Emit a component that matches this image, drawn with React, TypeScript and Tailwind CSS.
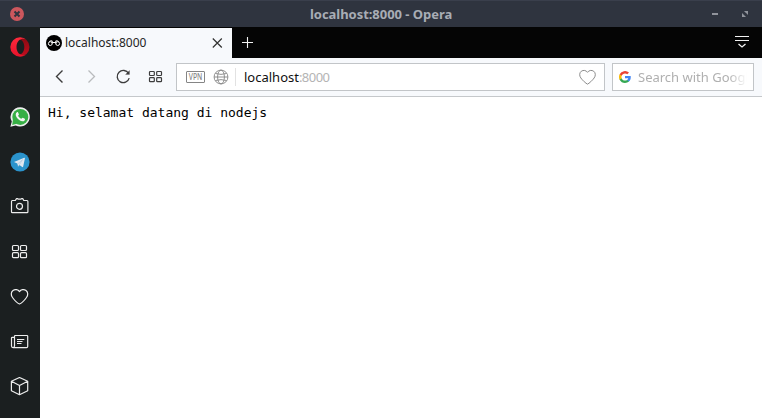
import type { ReactNode } from "react";

function Icon({ children, className = "" }: { children: ReactNode; className?: string }) {
  return (
    <svg width="20" height="20" viewBox="0 0 20 20" fill="none" stroke="currentColor" strokeWidth="1.2" className={"shrink-0 " + className}>
      {children}
    </svg>
  );
}

function OperaLogo() {
  return (
    <Icon className="size-5">
      <defs>
        <linearGradient id="operaLeft" x1="0" y1="0" x2="0" y2="1">
          <stop offset="0" stopColor="#ff2a3c" />
          <stop offset="1" stopColor="#e8132b" />
        </linearGradient>
        <linearGradient id="operaRight" x1="0" y1="0" x2="0" y2="1">
          <stop offset="0" stopColor="#8e0a12" />
          <stop offset="1" stopColor="#c00d1e" />
        </linearGradient>
      </defs>
      <path stroke="none" fill="url(#operaRight)" d="M9 2.8C11 1.2 14 1.2 16.5 2.9A9.9 9.9 0 0 1 16.5 17.1C14 18.800 11 18.800 9 17.2C12.200 17.8 14.300 14.300 14.300 10S12.200 2.200 9 2.800Z" />
      <path stroke="none" fill="url(#operaLeft)" d="M10 .3A9.7 9.7 0 1 0 10 19.7C12.5 19.7 14.8 18.8 16.6 17.2C12.8 19.6 6.5 17.5 6.5 10S12.8.4 16.6 2.8A9.7 9.7 0 0 0 10 .3Z" />
    </Icon>
  );
}

function WhatsAppLogo() {
  return (
    <Icon>
      <path fill="#eeeeee" stroke="none" d="M10.3.3A9.6 9.6 0 0 0 1.8 14.6L.4 19.8l5.3-1.4A9.6 9.6 0 1 0 10.3.3Z" />
      <circle cx="10.3" cy="9.9" r="8" fill="#37af45" stroke="none" />
      <path fill="#37af45" stroke="none" d="M3 12.5 2.2 18l5.300-1.500Z" />
      <path fill="#f4f4f4" stroke="none" d="M7 5.2c.4-.2.9-.2 1.1.3l.8 1.8c.2.5-.7 1.2-.8 1.5.6 1.3 1.8 2.4 3.2 3 .4-.1 1-1.3 1.5-1l2 1c.5.3.1 1.6-.6 2.1-2.3 1.5-6.1-1.1-7.6-3.6C5.3 8.200 5.500 6 7 5.200Z" />
    </Icon>
  );
}

function TelegramLogo() {
  return (
    <Icon>
      <circle cx="10" cy="10" r="9.6" fill="#2b93cc" stroke="none" />
      <path fill="#dfe7f0" stroke="none" d="m4 9.900 10.200-4.100c.5-.2.9.1.7.8l-1.700 8c-.1.6-.6.7-1 .4l-2.700-2-1.400 1.400-.8-3Z" />
      <path stroke="#aac5dc" strokeWidth=".6" d="m7.900 11.800 4.700-4.200-3.300 5.200-1.200 1.500" />
    </Icon>
  );
}

function HeartIcon({ className = "" }: { className?: string }) {
  return (
    <Icon className={className}>
      <path strokeLinejoin="round" d="M10 4.600C8.700 2.400 5.500 1.900 3.500 3.400C1.300 5 1.300 8.300 3 10.500C4.700 12.900 8.300 16.300 10 17C11.700 16.300 15.300 12.900 17 10.500C18.700 8.300 18.700 5 16.500 3.400C14.500 1.900 11.300 2.400 10 4.600Z" />
    </Icon>
  );
}

function Sidebar() {
  return (
    <aside className="flex w-10 shrink-0 flex-col items-center bg-[#1b1f20] pt-2.5 text-[#ededed]">
      <OperaLogo />
      <nav className="mt-[50px] flex flex-col gap-[25px]">
        <WhatsAppLogo />
        <TelegramLogo />
        <Icon>
          <path strokeLinejoin="round" d="M2.300 3.500H5.300L6.500 1.600H7.700L8.100 2.100H11L11.500 1.600H12.700L13.800 3.500H17Q17.900 3.500 17.900 4.400V14.700Q17.900 15.600 17 15.600H2.300Q1.500 15.600 1.500 14.700V4.400Q1.500 3.500 2.300 3.500Z" />
          <circle cx="9.500" cy="9.300" r="3" />
        </Icon>
        <Icon>
          <rect x="2.500" y="3.500" width="6" height="5" rx="1" />
          <rect x="10.500" y="3.500" width="6" height="5" rx="1" />
          <rect x="2.500" y="10.700" width="6" height="5" rx="1" />
          <rect x="10.500" y="10.700" width="6" height="5" rx="1" />
        </Icon>
        <HeartIcon className="-translate-x-[.5px]" />
        <Icon>
          <path strokeLinejoin="round" d="M4.500 5.300H2.300Q1.500 5.300 1.500 6.100V14.100Q1.500 15.600 3 15.600H16.500Q17.700 15.600 17.700 14.400V4.300Q17.700 3.500 16.900 3.500H5.300Q4.500 3.500 4.500 4.300V14.100Q4.500 15.600 3 15.600" />
          <path d="M7 7.500H14.300M7 9.500H12.500M7 11.500H11.500" strokeWidth="1" />
        </Icon>
        <Icon>
          <path strokeLinejoin="round" d="M9.500.5 17.700 4.300V13.700L9.500 17.700 1.400 13.700V4.300ZM1.400 4.300 9.500 8.500 17.700 4.300M9.500 8.500V17.700" />
        </Icon>
      </nav>
    </aside>
  );
}

function TitleBar() {
  return (
    <header className="flex h-[27px] shrink-0 items-center border-t border-[#3a3f4c] bg-[#2f343f] pl-[9px] pr-3">
      <svg width="16" height="16" viewBox="0 0 16 16" className="-mt-px">
        <circle cx="8" cy="8" r="7" fill="#cc575d" />
        <path d="m5.500 5.500 5 5m0-5-5 5" stroke="#2f343f" strokeWidth="2" />
      </svg>
      <h1 className="ml-[285px] flex-1 whitespace-nowrap text-[13px] font-bold leading-5 tracking-[-0.04px] text-[#a8adb5]">localhost:8000 - Opera</h1>
      <svg width="40" height="14" viewBox="0 0 40 14" fill="#90939b" className="-mt-px">
        <path d="M2 6h6v2H2ZM34 4h4v4l-1.400-1.400L35.400 5.400ZM32 6l4 4h-4Z" />
      </svg>
    </header>
  );
}

function TabStrip() {
  return (
    <div className="flex h-[31px] bg-[#050505] pt-px text-[#f2f2f2]">
      <div className="flex w-48 shrink-0 items-center bg-[#f7f9fc] pl-1.5 pr-1.5 text-[#252525]">
        <svg width="16" height="16" viewBox="0 0 16 16" fill="none" stroke="#fff" strokeWidth="1" className="-mt-px">
          <circle cx="8" cy="8" r="8" fill="#000" stroke="none" />
          <circle cx="4.300" cy="8.600" r="1.900" />
          <circle cx="11.700" cy="8.600" r="1.900" />
          <path d="M3.300 6.500Q4.500 5.500 6.200 5.900V8.600M12.700 6.500Q11.500 5.500 9.800 5.900V8.600M6.200 7.500H9.800" />
        </svg>
        <span className="ml-[3px] flex-1 text-[12px] leading-[18px]">localhost:8000</span>
        <svg width="18" height="18" viewBox="0 0 18 18" stroke="#333" strokeWidth="1.200">
          <path d="m4.800 4.500 9 9m0-9-9 9" />
        </svg>
      </div>
      <svg width="30" height="30" viewBox="0 0 30 30" stroke="currentColor" strokeWidth="1.100">
        <path d="M15.500 9v11M10 14.500h11" />
      </svg>
      <svg width="30" height="30" viewBox="0 0 30 30" fill="none" stroke="currentColor" className="ml-auto mr-[5px]">
        <path d="M8 8.500h14M8 12.500h14" />
        <path d="m11.500 16 3.500 3 3.500-3" strokeWidth="1.300" />
      </svg>
    </div>
  );
}

function AddressBar() {
  return (
    <div className="flex h-7 w-[429px] shrink-0 items-center border border-[#c2c5c8] bg-white pl-[9px] pr-2 text-[#858585]">
      <div className="flex h-3 w-[19px] items-center justify-center rounded-[1px] border border-current">
        <svg width="17" height="10" viewBox="0 0 17 10" overflow="visible">
          <text x="8.500" y="8.200" textAnchor="middle" textLength="13.500" lengthAdjust="spacingAndGlyphs" fontSize="9" fontWeight="500" fill="currentColor">VPN</text>
        </svg>
      </div>
      <svg width="16" height="16" viewBox="0 0 16 16" fill="none" stroke="currentColor" strokeWidth=".9" className="ml-2">
        <circle cx="8" cy="8" r="6.900" />
        <ellipse cx="8" cy="8" rx="3.400" ry="6.900" />
        <path d="M1.100 8h13.800M2.500 4.500Q8 6.300 13.500 4.500M2.500 11.500Q8 9.700 13.500 11.500" />
      </svg>
      <div className="ml-1.5 h-[18px] w-px bg-[#e2e2e2]" />
      <span className="ml-2 flex-1 text-[13px] leading-5 text-[#101010]">
        localhost<span className="tracking-[-0.55px] text-[#b4b4b4]">:8000</span>
      </span>
      <HeartIcon className="-mr-px size-[19px] [stroke-width:1]" />
    </div>
  );
}

function SearchBox() {
  return (
    <div className="flex h-7 w-[142px] shrink-0 items-center border border-[#c2c5c8] bg-white pl-1.5">
      <svg width="12" height="12" viewBox="0 0 24 24">
        <path fill="#4285f4" d="M23.500 12.300c0-.9-.1-1.700-.2-2.500H12v4.700h6.500c-.3 1.500-1.200 2.800-2.400 3.600v3h3.900c2.200-2.100 3.500-5.200 3.500-8.800Z" />
        <path fill="#34a853" d="M12 24c3.200 0 6-1.100 8-2.900l-3.900-3c-1.100.7-2.500 1.100-4.100 1.100-3.100 0-5.800-2.100-6.700-4.900h-4v3.100C3.300 21.300 7.300 24 12 24Z" />
        <path fill="#fbbc05" d="M5.300 14.300a7 7 0 0 1 0-4.600V6.600h-4a12 12 0 0 0 0 10.800Z" />
        <path fill="#ea4335" d="M12 4.800c1.800 0 3.300.6 4.600 1.800L20 3.200A12 12 0 0 0 1.300 6.600l4 3.100C6.200 6.900 8.900 4.800 12 4.800Z" />
      </svg>
      <span className="ml-[7px] w-[109px] overflow-hidden whitespace-nowrap text-[13px] leading-5 text-[#b0b0b0] [mask-image:linear-gradient(to_right,black_83%,transparent)]">Search with Google</span>
    </div>
  );
}

function Toolbar() {
  return (
    <div className="flex h-[39px] items-center border-b border-[#c5c8cb] bg-[#f7f9fc] pr-2 text-[#3c3c3c]">
      <div className="flex w-[136px] shrink-0 items-center gap-3 pl-[9px]">
        <Icon className="[stroke-width:1.4]"><path d="m13.500 3.500-6 6 6 6" /></Icon>
        <Icon className="text-[#b9bbbd] [stroke-width:1.3]"><path d="m7.500 3.500 6 6-6 6" /></Icon>
        <Icon className="[stroke-width:1.3]">
          <path d="M15.600 6.500A6.100 6.100 0 1 0 16.200 11.200" />
          <path d="M16.500 3.500V7.500H12.500Z" fill="currentColor" strokeWidth=".2" />
        </Icon>
        <Icon>
          <rect x="4.500" y="4.500" width="4.800" height="4" rx=".8" />
          <rect x="11.700" y="4.500" width="4.800" height="4" rx=".8" />
          <rect x="4.500" y="10.700" width="4.800" height="4" rx=".8" />
          <rect x="11.700" y="10.700" width="4.800" height="4" rx=".8" />
        </Icon>
      </div>
      <AddressBar />
      <div className="ml-[7px]"><SearchBox /></div>
    </div>
  );
}

export default function App() {
  return (
    <div className="flex h-[418px] w-[762px] flex-col overflow-hidden bg-white font-['Noto_Sans',sans-serif]">
      <TitleBar />
      <div className="flex min-h-0 flex-1">
        <Sidebar />
        <section className="min-w-0 flex-1">
          <TabStrip />
          <Toolbar />
          <main className="p-2">
            <pre className="font-['DejaVu_Sans_Mono',monospace] text-[13px] leading-[15px] text-black">Hi, selamat datang di nodejs</pre>
          </main>
        </section>
      </div>
    </div>
  );
}
